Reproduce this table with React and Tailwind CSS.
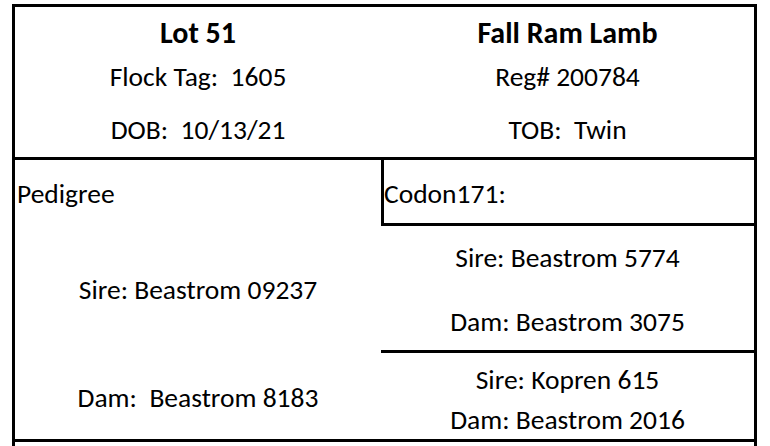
import React from "react";

const HeaderCell = ({ title, lines }) => (
  <div className="flex flex-col items-center">
    <p className="mt-[11px] text-[30px] leading-[30px] font-bold">{title}</p>
    <p className="mt-[14px] leading-[30px] whitespace-pre">{lines[0]}</p>
    <p className="mt-[23px] leading-[30px] whitespace-pre">{lines[1]}</p>
  </div>
);

export default function App() {
  return (
    <div className="h-[446px] w-[770px] overflow-hidden bg-white text-[27.5px] text-black font-[Calibri,Carlito,Lato,sans-serif]">
      <div className="ml-[12px] mt-[4px] w-[745px] border-x-[3px] border-t-[3px] border-black">
        {/* header row */}
        <div className="grid h-[153px] grid-cols-[366px_373px] border-b-[3px] border-black">
          <HeaderCell title="Lot 51" lines={["Flock Tag:  1605", "DOB:  10/13/21"]} />
          <HeaderCell title="Fall Ram Lamb" lines={["Reg# 200784", "TOB:  Twin"]} />
        </div>

        {/* pedigree row */}
        <div className="grid h-[282px] grid-cols-[366px_373px] border-b-[3px] border-black">
          <div className="flex flex-col">
            <p className="mt-[19px] pl-[2px] leading-[30px]">Pedigree</p>
            <p className="mt-[66px] text-center leading-[30px]">Sire: Beastrom 09237</p>
            <p className="mt-[78px] text-center leading-[30px] whitespace-pre">Dam:  Beastrom 8183</p>
          </div>

          <div className="flex flex-col">
            <div className="h-[66px] border-b-[3px] border-l-[3px] border-black">
              <p className="mt-[19px] leading-[30px]">Codon171:</p>
            </div>
            <div className="h-[127px] border-b-[3px] border-black text-center">
              <p className="leading-[64px]">Sire: Beastrom 5774</p>
              <p className="leading-[64px]">Dam: Beastrom 3075</p>
            </div>
            <div className="pt-[7px] text-center">
              <p className="leading-[40px]">Sire: Kopren 615</p>
              <p className="leading-[40px]">Dam: Beastrom 2016</p>
            </div>
          </div>
        </div>

        {/* next row, cut off */}
        <div className="h-[40px]" />
      </div>
    </div>
  );
}
